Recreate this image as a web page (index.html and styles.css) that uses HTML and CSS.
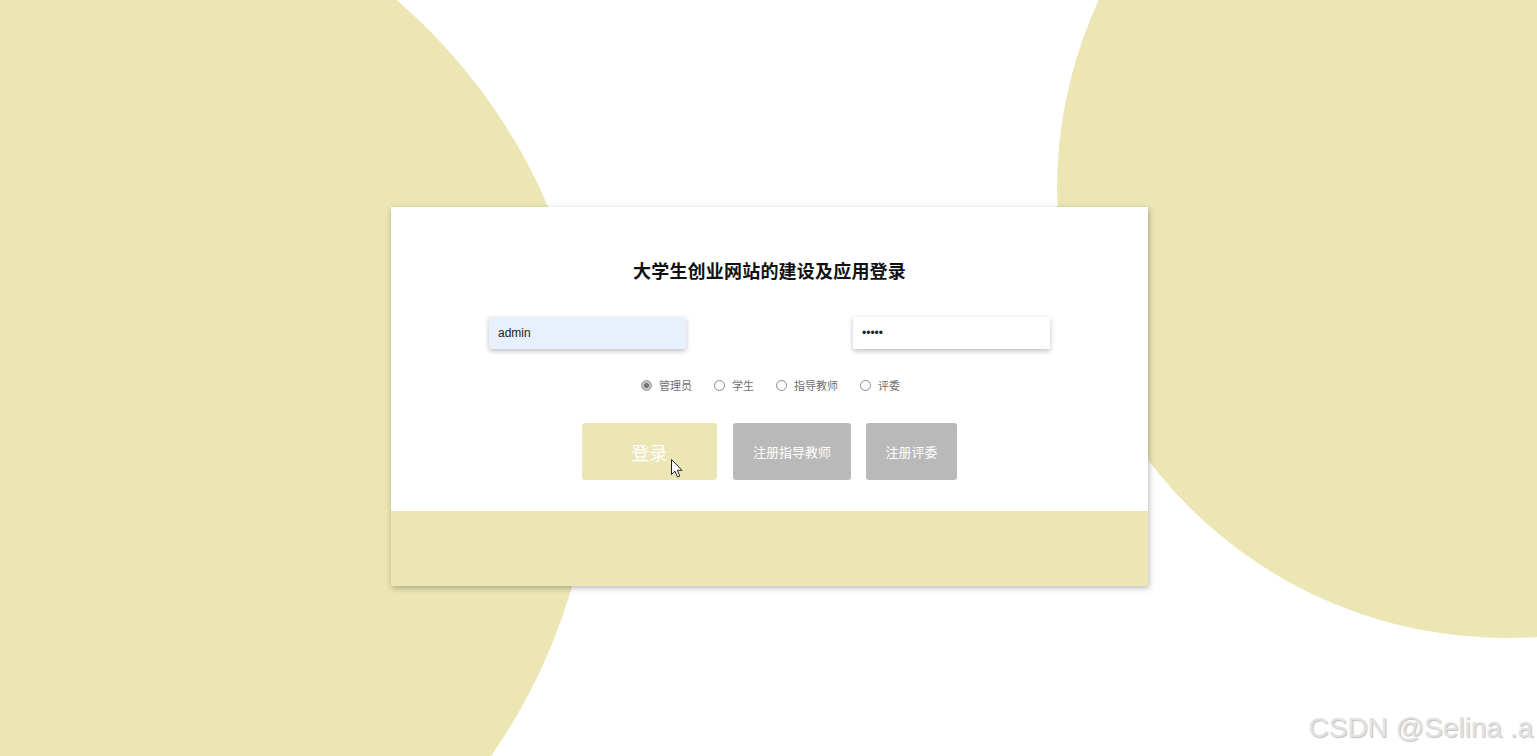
FILE: index.html
```html
<!DOCTYPE html>
<html lang="zh">
<head>
<meta charset="utf-8">
<title>登录</title>
<link rel="stylesheet" href="styles.css">
</head>
<body>
<div class="page">
  <div class="blob blob-left"></div>
  <div class="blob blob-right"></div>

  <div class="card">
    <div class="card-main">
      <h1 class="title">大学生创业网站的建设及应用登录</h1>
      <div class="fields">
        <input class="field field-auto" type="text" value="admin">
        <input class="field" type="password" value="12345">
      </div>
      <div class="roles">
        <label class="role"><span class="dot dot-on"></span>管理员</label>
        <label class="role"><span class="dot"></span>学生</label>
        <label class="role"><span class="dot"></span>指导教师</label>
        <label class="role"><span class="dot"></span>评委</label>
      </div>
      <div class="actions">
        <button class="btn btn-login">登录
          <svg class="cursor" width="12" height="19" viewBox="0 0 12 19"><path d="M0.5 0.5 L0.5 15.5 L4 12.2 L6.6 18 L8.8 17 L6.3 11.3 L11 11.3 Z" fill="#fff" stroke="#222" stroke-width="1"/></svg>
        </button>
        <button class="btn btn-gray btn-teacher">注册指导教师</button>
        <button class="btn btn-gray btn-judge">注册评委</button>
      </div>
    </div>
    <div class="card-foot"></div>
  </div>

  <div class="watermark">CSDN @Selina .a</div>
</div>
</body>
</html>
```
FILE: styles.css
```css
html, body {
  margin: 0;
  padding: 0;
}
body {
  font-family: "Noto Sans CJK SC", "Noto Sans", sans-serif;
  background: #ffffff;
}
.page {
  position: relative;
  width: 1537px;
  height: 756px;
  overflow: hidden;
  display: flex;
  justify-content: center;
  align-items: flex-start;
  padding: 207px 0 0 2px;
  box-sizing: border-box;
}
.blob {
  position: absolute;
  border-radius: 50%;
  background: #ebe6b3;
}
.blob-left {
  width: 1134px;
  height: 1134px;
  left: -540px;
  top: -137px;
}
.blob-right {
  width: 898px;
  height: 898px;
  left: 1057px;
  top: -260px;
}
.card {
  position: relative;
  z-index: 1;
  width: 757px;
  background: #fff;
  box-shadow: 1px 2px 6px rgba(0, 0, 0, 0.28);
  display: flex;
  flex-direction: column;
}
.card-main {
  height: 304px;
  display: flex;
  flex-direction: column;
  align-items: center;
}
.card-foot {
  height: 75px;
  background: #ebe6b3;
}
.title {
  margin: 51px 0 0;
  font-size: 18px;
  line-height: 24px;
  font-weight: 700;
  color: #111;
  letter-spacing: 0.2px;
}
.fields {
  align-self: stretch;
  margin-top: 35px;
  padding: 0 98px;
  display: flex;
  justify-content: space-between;
}
.field {
  width: 197px;
  height: 32px;
  box-sizing: border-box;
  border: none;
  outline: none;
  padding: 0 9px;
  font-family: "Liberation Sans", Arial, sans-serif;
  font-size: 12px;
  color: #222;
  background: #fff;
  box-shadow: 0 2px 5px rgba(0, 0, 0, 0.25);
}
.field-auto {
  background: #e8f0fe;
}
.roles {
  margin-top: 28px;
  height: 16px;
  display: flex;
  align-items: center;
  gap: 22px;
  padding-left: 2px;
}
.role {
  display: flex;
  align-items: center;
  gap: 7px;
  font-size: 11px;
  line-height: 16px;
  color: #6f6f6f;
}
.dot {
  width: 11px;
  height: 11px;
  box-sizing: border-box;
  border-radius: 50%;
  border: 1px solid #8a8a8a;
  background: #fff;
}
.dot-on {
  background: radial-gradient(circle, #777 0 2.2px, #c4c4c4 2.7px);
  border-color: #999;
}
.actions {
  margin-top: 30px;
  display: flex;
  gap: 15px;
}
.btn {
  height: 57px;
  border: none;
  border-radius: 3px;
  color: #fff;
  font-family: "Noto Sans CJK SC", "Noto Sans", sans-serif;
  padding: 0;
  cursor: pointer;
}
.btn-login {
  position: relative;
  width: 135px;
  background: #ebe6b3;
  font-size: 18px;
  margin-right: 1px;
}
.btn-gray {
  background: #b9b9b9;
  font-size: 13px;
}
.btn-teacher {
  width: 118px;
}
.btn-judge {
  width: 91px;
}
.cursor {
  position: absolute;
  left: 89px;
  top: 36px;
}
.watermark {
  position: absolute;
  right: 4px;
  bottom: 13px;
  z-index: 2;
  font-family: "Liberation Sans", Arial, sans-serif;
  font-size: 28px;
  line-height: 30px;
  color: #e2e2e2;
  text-shadow: 1px 1px 1px rgba(0, 0, 0, 0.25);
}
```
